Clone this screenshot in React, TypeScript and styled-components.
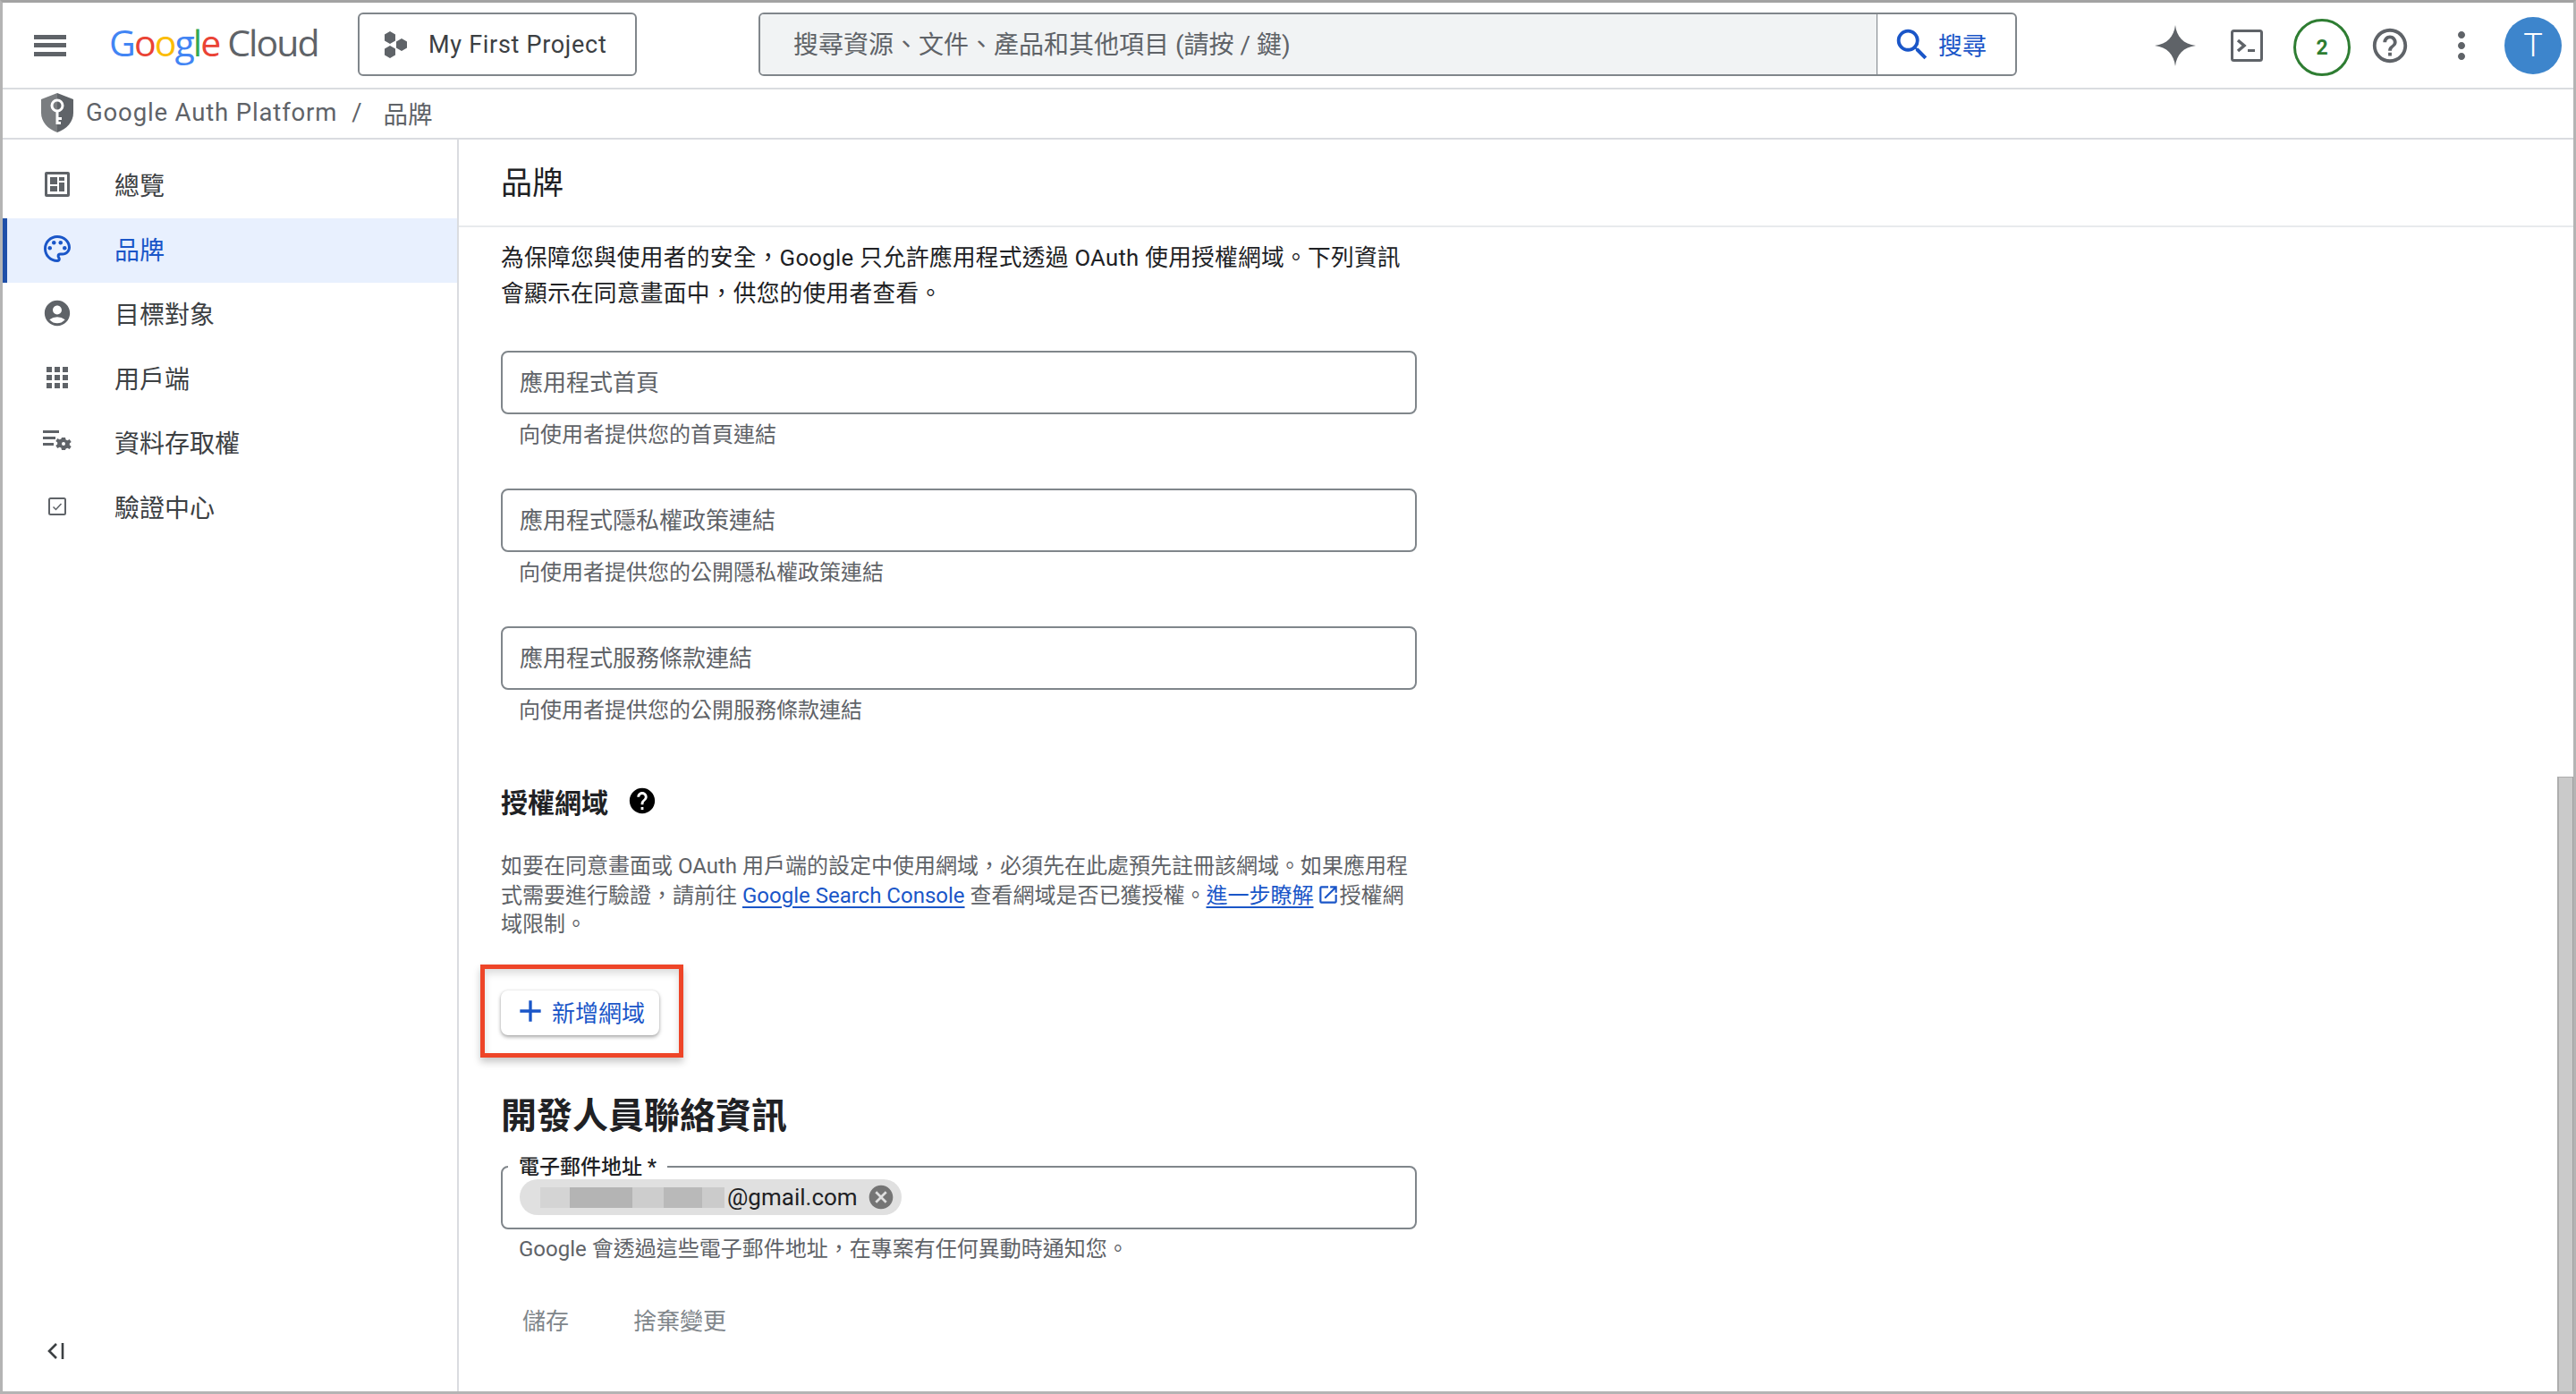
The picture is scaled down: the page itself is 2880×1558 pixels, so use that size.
import React from "react";
import styled, { createGlobalStyle } from "styled-components";
import {
  MdAccountCircle,
  MdAdd,
  MdApps,
  MdCancel,
  MdHelp,
  MdHelpOutline,
  MdMoreVert,
  MdOpenInNew,
  MdOutlinePalette,
  MdSearch,
} from "react-icons/md";

const GlobalStyle = createGlobalStyle`
  html, body {
    margin: 0;
    padding: 0;
    background: #fff;
  }
  body {
    font-family: Roboto, "Noto Sans CJK TC", sans-serif;
    color: #202124;
  }
  * {
    box-sizing: border-box;
  }
`;

const Frame = styled.div`
  width: 2880px;
  height: 1558px;
  display: flex;
  flex-direction: column;
  border: 3px solid #b4b4b4;
  border-top-color: #a3a3a3;
  overflow: hidden;
`;

const Header = styled.header`
  height: 97px;
  flex: none;
  display: flex;
  align-items: center;
  border-bottom: 2px solid #dadce0;
  position: relative;
  padding-left: 35px;
`;

const MenuButton = styled.div`
  width: 36px;
  height: 24px;
  flex: none;
  display: flex;
  flex-direction: column;
  justify-content: space-between;
`;

const MenuLine = styled.span`
  height: 5px;
  background: #5f6368;
`;

const Logo = styled.div`
  margin-left: 48px;
  width: 278px;
  font-family: "Open Sans", sans-serif;
  font-size: 41px;
  letter-spacing: -1.9px;
  color: #5f6368;
  margin-top: -7px;
  white-space: nowrap;
`;

const LogoLetter = styled.span<{ $c: string }>`
  color: ${(p) => p.$c};
`;

const ProjectButton = styled.div`
  width: 312px;
  height: 71px;
  flex: none;
  display: flex;
  align-items: center;
  gap: 22px;
  padding-left: 27px;
  border: 2px solid #80868b;
  border-radius: 6px;
  font-size: 27px;
  letter-spacing: 0.7px;
  color: #3c4043;
  margin-top: -2px;
`;

const SearchBox = styled.div`
  width: 1407px;
  height: 71px;
  flex: none;
  margin-left: 136px;
  margin-top: -2px;
  display: flex;
  border: 2px solid #80868b;
  border-radius: 6px;
  overflow: hidden;
`;

const SearchInput = styled.div`
  flex: 1;
  background: #f1f3f4;
  display: flex;
  align-items: center;
  padding: 0 0 3px 37px;
  font-size: 28px;
  color: #5f6368;
  border-right: 1px solid #80868b;
`;

const SearchAction = styled.div`
  width: 154px;
  display: flex;
  align-items: center;
  padding-left: 16px;
  gap: 6px;
  font-size: 27px;
  color: #1a56c8;
`;

const HeaderIcons = styled.div`
  margin-left: auto;
  display: flex;
  align-items: center;
  height: 100%;
  padding-right: 13px;
  color: #5f6368;
`;

const HeaderIconSlot = styled.div<{ $w: number; $ml?: number }>`
  width: ${(p) => p.$w}px;
  margin-left: ${(p) => p.$ml ?? 0}px;
  display: flex;
  justify-content: center;
  align-items: center;
`;

const Credits = styled.div`
  width: 64px;
  height: 64px;
  border: 3px solid #2e7d32;
  border-radius: 50%;
  display: flex;
  align-items: center;
  justify-content: center;
  color: #2e7d32;
  font-size: 23px;
  font-weight: 700;
  margin-left: 34px;
  margin-top: 5px;
`;

const Avatar = styled.div`
  width: 64px;
  height: 64px;
  margin-left: 24px;
  border-radius: 50%;
  background: #3d85cc;
  color: #fff;
  font-size: 36px;
  font-weight: 300;
  display: flex;
  align-items: center;
  justify-content: center;
`;

const Breadcrumb = styled.nav`
  height: 56px;
  flex: none;
  display: flex;
  align-items: center;
  padding: 0 0 3px 43px;
  border-bottom: 2px solid #dadce0;
  font-size: 27.5px;
  color: #5f6368;
`;

const CrumbApp = styled.span`
  margin-left: 14px;
  letter-spacing: 0.85px;
`;

const CrumbSep = styled.span`
  margin: 0 24px 0 16px;
`;

const Body = styled.div`
  flex: 1;
  min-height: 0;
  display: flex;
`;

const Sidebar = styled.aside`
  width: 510px;
  flex: none;
  display: flex;
  flex-direction: column;
  padding-top: 16px;
  border-right: 2px solid #dadce0;
`;

const NavItem = styled.div<{ $active?: boolean }>`
  position: relative;
  height: 72px;
  display: flex;
  align-items: center;
  padding-bottom: 4px;
  font-size: 28px;
  color: ${(p) => (p.$active ? "#1a56c8" : "#3c4043")};
  background: ${(p) => (p.$active ? "#e8f0fe" : "transparent")};
  &::before {
    content: "";
    display: ${(p) => (p.$active ? "block" : "none")};
    position: absolute;
    left: -3px;
    top: 0;
    bottom: 0;
    width: 8px;
    background: #1f4fa8;
  }
`;

const NavIcon = styled.div`
  width: 32px;
  height: 32px;
  margin-left: 45px;
  margin-right: 48px;
  display: flex;
  align-items: center;
  justify-content: center;
  color: #5f6368;
  svg {
    flex: none;
  }
`;

const NavIconActive = styled(NavIcon)`
  color: #1a56c8;
`;

const Collapse = styled.div`
  margin-top: auto;
  height: 55px;
  padding-left: 48px;
  color: #3c4043;
`;

const Main = styled.main`
  flex: 1;
  min-width: 0;
  position: relative;
`;

const TitleBar = styled.div`
  height: 98px;
  padding: 0 0 6px 47px;
  display: flex;
  align-items: center;
  border-bottom: 2px solid #e8eaed;
  font-size: 35px;
  font-weight: 400;
  color: #202124;
`;

const Content = styled.div`
  width: 1071px;
  padding: 14px 0 0 47px;
`;

const Intro = styled.p`
  margin: 0 0 44px;
  max-width: 1012px;
  font-size: 25.7px;
  line-height: 40px;
  letter-spacing: 0.28px;
  color: #202124;
`;

const FieldGroup = styled.div`
  margin-bottom: 45px;
`;

const OutlinedField = styled.div`
  position: relative;
  height: 71px;
  display: flex;
  align-items: center;
  padding: 0 0 4px 19px;
  border: 2px solid #80868b;
  border-radius: 8px;
  font-size: 26px;
  color: #5f6368;
`;

const Helper = styled.div`
  margin-top: 8px;
  padding-left: 20px;
  font-size: 24px;
  line-height: 30px;
  color: #5f6368;
`;

const SectionHeading = styled.h3`
  margin: 66px 0 37px;
  display: flex;
  align-items: center;
  gap: 21px;
  height: 40px;
  font-size: 30px;
  font-weight: 700;
  color: #202124;
`;

const DomainNote = styled.p`
  margin: 0;
  font-size: 24px;
  line-height: 32.5px;
  color: #5f6368;
`;

const TextLink = styled.a`
  color: #1a56c8;
  text-decoration: underline;
  text-underline-offset: 4px;
`;

const ExternalIcon = styled.span`
  display: inline-block;
  color: #1a56c8;
  margin-left: 3px;
  vertical-align: -4px;
  line-height: 0;
`;

const Highlight = styled.div`
  width: 227px;
  height: 104px;
  margin: 28px 0 41px -23px;
  padding: 24px 0 0 18px;
  border: 5px solid #ee4528;
  box-shadow: 0 5px 8px rgba(0, 0, 0, 0.22), inset 0 5px 8px rgba(0, 0, 0, 0.14);
`;

const AddButton = styled.div`
  width: 177px;
  height: 50px;
  display: flex;
  align-items: center;
  gap: 4px;
  padding: 0 0 3px 13px;
  background: #fff;
  border-radius: 8px;
  box-shadow: 0 2px 4px rgba(0, 0, 0, 0.35), 0 0 2px rgba(0, 0, 0, 0.1);
  font-size: 26px;
  color: #1a56c8;
`;

const ContactHeading = styled.h2`
  margin: 0 0 30px;
  height: 50px;
  line-height: 50px;
  font-size: 40px;
  font-weight: 700;
  color: #202124;
`;

const FloatingLabel = styled.span`
  position: absolute;
  left: 6px;
  top: -13px;
  padding: 0 12px;
  background: #fff;
  font-size: 23px;
  line-height: 26px;
  font-weight: 500;
  color: #202124;
`;

const Chip = styled.div`
  height: 40px;
  width: 427px;
  margin-top: 4px;
  display: flex;
  align-items: center;
  padding-left: 23px;
  border-radius: 20px;
  background: #e0e0e0;
  font-size: 26px;
  color: #202124;
`;

const Redacted = styled.div`
  width: 206px;
  height: 23px;
  flex: none;
  margin-right: 3px;
  background: linear-gradient(
    90deg,
    #d4d4d4 0 16%,
    #b4b4b4 16% 50%,
    #cdcdcd 50% 67%,
    #b9b9b9 67% 88%,
    #cbcbcb 88% 100%
  );
`;

const ChipClose = styled.span`
  display: flex;
  margin-left: 10px;
  color: #757575;
`;

const ContactHelper = styled(Helper)`
  margin-top: 7px;
`;

const Actions = styled.div`
  display: flex;
  align-items: center;
  gap: 72px;
  height: 40px;
  margin-top: 44px;
  padding-left: 24px;
  font-size: 26px;
  color: #80868b;
`;

const ScrollThumb = styled.div`
  position: absolute;
  right: 0;
  bottom: 0;
  width: 18px;
  height: 687px;
  background: #cacaca;
  border-left: 2px solid #adadad;
  border-top: 1px solid #adadad;
  border-right: 1px solid #a0a0a0;
`;

const DashboardIcon = () => (
  <svg width="28" height="28" viewBox="0 0 28 28" fill="#5f6368">
    <path
      fillRule="evenodd"
      d="M2 0h24a2 2 0 0 1 2 2v24a2 2 0 0 1-2 2H2a2 2 0 0 1-2-2V2a2 2 0 0 1 2-2Zm1 3v22h22V3H3Zm3 3h8v8H6V6Zm10 0h6v4h-6V6Zm0 6h6v10h-6V12ZM6 16h8v6H6v-6Z"
    />
  </svg>
);

const DataAccessIcon = () => (
  <svg width="32" height="26" viewBox="0 0 32 26" fill="#5f6368">
    <path d="M0 0h18v3H0zM0 7h14v3H0zM0 14h12v3H0z" />
    <path d="M21 8h4l.6 2.4 1.9.8 2.2-1.3 2 3-1.9 1.6v2l1.9 1.6-2 3-2.2-1.3-1.9.8L25 22h-4l-.6-2.4-1.9-.8-2.2 1.3-2-3 1.9-1.6v-2l-1.9-1.6 2-3 2.2 1.3 1.9-.8L21 8Zm2 5a2 2 0 1 0 0 4 2 2 0 0 0 0-4Z" />
  </svg>
);

const VerifyIcon = () => (
  <svg width="20" height="20" viewBox="0 0 20 20" fill="none" stroke="#5f6368">
    <rect x="1" y="1" width="18" height="18" rx="1.5" strokeWidth="2" />
    <path d="M5.5 10.5 8.5 13.5 14.5 7" strokeWidth="1.5" />
  </svg>
);

const ProjectIcon = () => (
  <svg width="28" height="30" viewBox="0 0 28 30" fill="#5f6368">
    <path d="M7 0l6 3.5v7L7 14 1 10.500v-7zM20 8l6 3.5v7L20 22l-6-3.500v-7zM7 16l6 3.500v7L7 30l-6-3.500v-7z" />
  </svg>
);

const ShieldIcon = () => (
  <svg width="36" height="44" viewBox="0 0 36 44">
    <defs>
      <linearGradient id="shield" x1="0" x2="1" y1="0" y2="0">
        <stop offset="0.5" stopColor="#7a7d80" />
        <stop offset="0.5" stopColor="#5f6368" />
      </linearGradient>
    </defs>
    <path d="M18 0 36 7v15c0 10-7 18-18 22C7 40 0 32 0 22V7L18 0Z" fill="url(#shield)" />
    <circle cx="18" cy="14" r="6" fill="none" stroke="#fff" strokeWidth="3" />
    <path d="M16.500 19h3v16h-3zM19 27h4v3h-4zM19 32h3v3h-3z" fill="#fff" />
  </svg>
);

const SparkIcon = () => (
  <svg width="46" height="46" viewBox="0 0 46 46" fill="#5f6368">
    <path d="M23 0c1.500 13 9 21.500 23 23-14 1.500-21.500 10-23 23-1.500-13-9-21.500-23-23 14-1.500 21.500-10 23-23Z" />
  </svg>
);

const TerminalIcon = () => (
  <svg width="36" height="36" viewBox="0 0 36 36" fill="none">
    <rect x="1.500" y="1.500" width="33" height="33" rx="2" stroke="#5f6368" strokeWidth="3" />
    <path d="M8 12l7 6-7 6" stroke="#5f6368" strokeWidth="3.500" />
    <path d="M19 22h8v3h-8z" fill="#5f6368" />
  </svg>
);

const CollapseIcon = () => (
  <svg width="24" height="20" viewBox="0 0 24 20" fill="none" stroke="#3c4043" strokeWidth="2.600">
    <path d="M12 2 4 10l8 8" />
    <path d="M19 1v18" />
  </svg>
);

const GOOGLE_LETTERS: [string, string][] = [
  ["G", "#4285f4"],
  ["o", "#ea4335"],
  ["o", "#fbbc04"],
  ["g", "#4285f4"],
  ["l", "#34a853"],
  ["e", "#ea4335"],
];

const NAV_ITEMS = [
  { label: "總覽", icon: <DashboardIcon /> },
  { label: "品牌", icon: <MdOutlinePalette size={36} />, active: true },
  { label: "目標對象", icon: <MdAccountCircle size={34} /> },
  { label: "用戶端", icon: <MdApps size={36} /> },
  { label: "資料存取權", icon: <DataAccessIcon /> },
  { label: "驗證中心", icon: <VerifyIcon /> },
];

const LINK_FIELDS = [
  { label: "應用程式首頁", help: "向使用者提供您的首頁連結" },
  { label: "應用程式隱私權政策連結", help: "向使用者提供您的公開隱私權政策連結" },
  { label: "應用程式服務條款連結", help: "向使用者提供您的公開服務條款連結" },
];

export default function App() {
  return (
    <>
      <GlobalStyle />
      <Frame>
        <Header>
          <MenuButton>
            <MenuLine />
            <MenuLine />
            <MenuLine />
          </MenuButton>
          <Logo>
            {GOOGLE_LETTERS.map(([ch, c], i) => (
              <LogoLetter key={i} $c={c}>
                {ch}
              </LogoLetter>
            ))}{" "}
            Cloud
          </Logo>
          <ProjectButton>
            <ProjectIcon />
            My First Project
          </ProjectButton>
          <SearchBox>
            <SearchInput>搜尋資源、文件、產品和其他項目 (請按 / 鍵)</SearchInput>
            <SearchAction>
              <MdSearch size={46} />
              搜尋
            </SearchAction>
          </SearchBox>
          <HeaderIcons>
            <HeaderIconSlot $w={46}>
              <SparkIcon />
            </HeaderIconSlot>
            <HeaderIconSlot $w={36} $ml={39}>
              <TerminalIcon />
            </HeaderIconSlot>
            <Credits>2</Credits>
            <HeaderIconSlot $w={48} $ml={20}>
              <MdHelpOutline size={46} />
            </HeaderIconSlot>
            <HeaderIconSlot $w={48} $ml={32}>
              <MdMoreVert size={48} />
            </HeaderIconSlot>
            <Avatar>T</Avatar>
          </HeaderIcons>
        </Header>
        <Breadcrumb>
          <ShieldIcon />
          <CrumbApp>Google Auth Platform</CrumbApp>
          <CrumbSep>/</CrumbSep>
          <span>品牌</span>
        </Breadcrumb>
        <Body>
          <Sidebar>
            {NAV_ITEMS.map((item) => (
              <NavItem key={item.label} $active={item.active}>
                {item.active ? <NavIconActive>{item.icon}</NavIconActive> : <NavIcon>{item.icon}</NavIcon>}
                {item.label}
              </NavItem>
            ))}
            <Collapse>
              <CollapseIcon />
            </Collapse>
          </Sidebar>
          <Main>
            <TitleBar>品牌</TitleBar>
            <Content>
              <Intro>
                為保障您與使用者的安全，Google 只允許應用程式透過 OAuth 使用授權網域。下列資訊會顯示在同意畫面中，供您的使用者查看。
              </Intro>
              {LINK_FIELDS.map((f) => (
                <FieldGroup key={f.label}>
                  <OutlinedField>{f.label}</OutlinedField>
                  <Helper>{f.help}</Helper>
                </FieldGroup>
              ))}
              <SectionHeading>
                授權網域
                <MdHelp size={34} color="#000" />
              </SectionHeading>
              <DomainNote>
                如要在同意畫面或 OAuth 用戶端的設定中使用網域，必須先在此處預先註冊該網域。如果應用程式需要進行驗證，請前往{" "}
                <TextLink>Google Search Console</TextLink> 查看網域是否已獲授權。
                <TextLink>進一步瞭解</TextLink>
                <ExternalIcon>
                  <MdOpenInNew size={26} />
                </ExternalIcon>
                授權網域限制。
              </DomainNote>
              <Highlight>
                <AddButton>
                  <MdAdd size={40} />
                  新增網域
                </AddButton>
              </Highlight>
              <ContactHeading>開發人員聯絡資訊</ContactHeading>
              <OutlinedField>
                <FloatingLabel>電子郵件地址 *</FloatingLabel>
                <Chip>
                  <Redacted />
                  @gmail.com
                  <ChipClose>
                    <MdCancel size={32} />
                  </ChipClose>
                </Chip>
              </OutlinedField>
              <ContactHelper>Google 會透過這些電子郵件地址，在專案有任何異動時通知您。</ContactHelper>
              <Actions>
                <span>儲存</span>
                <span>捨棄變更</span>
              </Actions>
            </Content>
            <ScrollThumb />
          </Main>
        </Body>
      </Frame>
    </>
  );
}
